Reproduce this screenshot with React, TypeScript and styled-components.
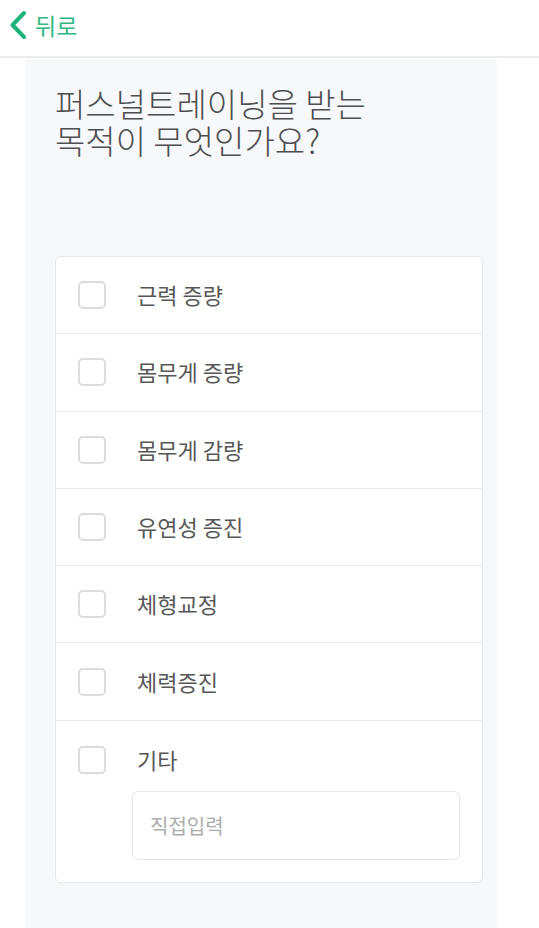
import React, {useState} from "react";
import styled, {createGlobalStyle} from "styled-components";

const OPTIONS = ["근력 증량", "몸무게 증량", "몸무게 감량", "유연성 증진", "체형교정", "체력증진", "기타"];

const GlobalStyle = createGlobalStyle`
  html, body {
    margin: 0;
    padding: 0;
    background: #ffffff;
    font-family: "Noto Sans CJK KR", "Noto Sans", sans-serif;
  }
`;

function App() {
    const [checked, setChecked] = useState<string[]>([]);
    const [etc, setEtc] = useState("");

    const toggle = (option: string) =>
        setChecked(prev => prev.includes(option) ? prev.filter(o => o !== option) : [...prev, option]);

    return (
        <Page>
            <GlobalStyle/>
            <Header>
                <BackButton>
                    <svg width="20" height="30" viewBox="0 0 20 30" fill="none">
                        <path d="M16 3 L4.5 15 L16 27" stroke="#1db47b" strokeWidth="4" strokeLinecap="round"
                              strokeLinejoin="round"/>
                    </svg>
                    <BackLabel>뒤로</BackLabel>
                </BackButton>
            </Header>
            <Panel>
                <Title>퍼스널트레이닝을 받는<br/>목적이 무엇인가요?</Title>
                <Card>
                    {OPTIONS.map((option, index) => (
                        <Row key={option} last={index === OPTIONS.length - 1}>
                            <OptionLine onClick={() => toggle(option)}>
                                <Checkbox checked={checked.includes(option)}/>
                                <Label>{option}</Label>
                            </OptionLine>
                            {option === "기타" &&
                                <EtcInput placeholder="직접입력" value={etc} onChange={e => setEtc(e.target.value)}/>}
                        </Row>
                    ))}
                </Card>
            </Panel>
        </Page>
    );
}

const Page = styled.div`
  width: 539px;
  min-height: 928px;
  background: #ffffff;
  display: flex;
  flex-direction: column;
`

const Header = styled.div`
  height: 56px;
  border-bottom: 2px solid #ececee;
  display: flex;
  align-items: center;
  padding-left: 8px;
  box-sizing: content-box;
  margin-bottom: 1px;
`

const BackButton = styled.div`
  display: flex;
  align-items: center;
  gap: 7px;
  margin-top: -6px;
`

const BackLabel = styled.span`
  color: #2fb882;
  font-size: 23px;
  line-height: 1;
`

const Panel = styled.div`
  flex: 1;
  margin: 0 42px 0 26px;
  background: #f7f8fb;
  padding: 26px 14px 0 29px;
`

const Title = styled.h1`
  margin: 0 0 97px;
  font-size: 33px;
  font-weight: 300;
  line-height: 37px;
  color: #4f4f4f;
`

const Card = styled.div`
  background: #ffffff;
  border: 1px solid #e6e7ea;
  border-radius: 6px;
`

const Row = styled.div<{ last?: boolean }>`
  border-bottom: ${({last}) => last ? "none" : "1px solid #e8e9ec"};
  padding: ${({last}) => last ? "25px 22px 22px 22px" : "0 22px"};
  height: ${({last}) => last ? "auto" : "76.3px"};
  display: flex;
  flex-direction: column;
  justify-content: center;
`

const OptionLine = styled.div`
  display: flex;
  align-items: center;
  gap: 31px;
  cursor: pointer;
`

const Checkbox = styled.span<{ checked?: boolean }>`
  width: 24px;
  height: 24px;
  border: 2px solid ${({checked}) => checked ? "#1db47b" : "#dcdcdf"};
  background: ${({checked}) => checked ? "#1db47b" : "#ffffff"};
  border-radius: 5px;
  flex-shrink: 0;
`

const Label = styled.span`
  font-size: 22px;
  color: #575757;
  line-height: 28px;
  margin-top: -2px;
`

const EtcInput = styled.input`
  margin: 17px 0 0 54px;
  height: 69px;
  box-sizing: border-box;
  border: 1px solid #e4e5e8;
  border-radius: 6px;
  padding: 0 17px;
  font-family: "Noto Sans CJK KR", "Noto Sans", sans-serif;
  font-size: 20px;
  color: #555555;
  outline: none;

  &::placeholder {
    color: #acacac;
  }
`

export default App;
